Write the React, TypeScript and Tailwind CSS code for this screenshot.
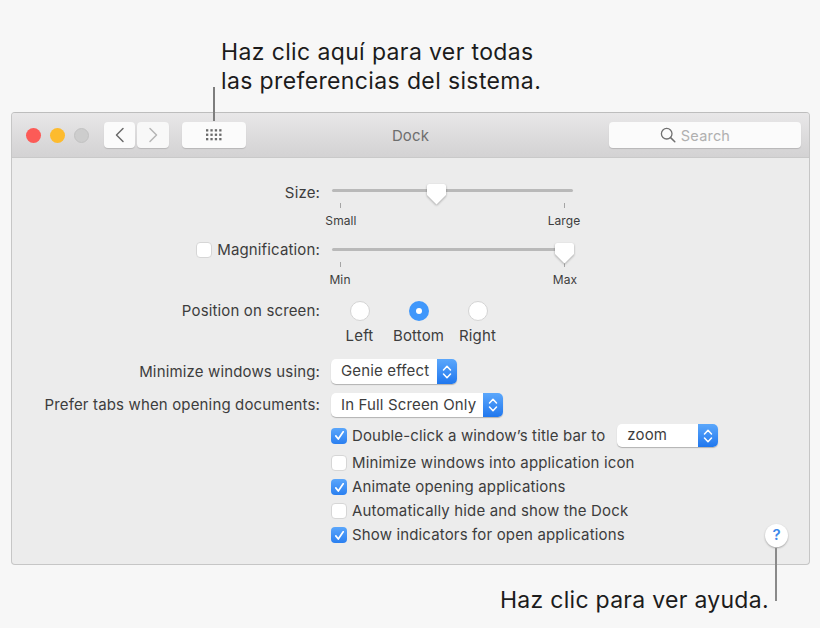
const font = { fontFamily: 'Inter, "Liberation Sans", sans-serif' };

function Check({ on }: { on?: boolean }) {
  return on ? (
    <span className="w-[16px] h-[16px] shrink-0 rounded-[4px] bg-gradient-to-b from-[#5aa6fb] to-[#2a7ff0] flex items-center justify-center">
      <svg width="13" height="13" viewBox="0 0 13 13" fill="none">
        <path d="M2.8 6.9 5.3 10 10.2 2.8" stroke="#fff" strokeWidth="1.7" strokeLinecap="round" strokeLinejoin="round" />
      </svg>
    </span>
  ) : (
    <span className="w-[16px] h-[16px] shrink-0 rounded-[4px] bg-white border border-[#d6d6d6]" />
  );
}

function Chevrons() {
  return (
    <svg width="12" height="18" viewBox="0 0 12 18" fill="none">
      <path d="M2.5 7 6 3.2 9.5 7M2.5 11 6 14.8 9.5 11" stroke="#fff" strokeWidth="1.5" strokeLinecap="round" strokeLinejoin="round" />
    </svg>
  );
}

function Select({ label, width, height }: { label: string; width: string; height: string }) {
  return (
    <div className={`${width} ${height} flex rounded-[5px] bg-white shadow-[0_1px_1px_rgba(0,0,0,0.25)] overflow-hidden`}>
      <span className="flex-1 pl-[10px] flex items-center text-[15px] tracking-[0.15px] text-[#3d3d3d]">{label}</span>
      <span className="w-[20px] flex items-center justify-center bg-gradient-to-b from-[#5ba7fb] to-[#1f77ee]">
        <Chevrons />
      </span>
    </div>
  );
}

function Slider({ thumb, left, right, leftX, rightX }: { thumb: number; left: string; right: string; leftX: number; rightX: number }) {
  return (
    <div className="relative w-[250px] h-[56px]">
      <div className="absolute left-px top-[5px] w-[241px] h-[3px] rounded-full bg-[#b9b9b9]" />
      <div className="absolute left-[9px] top-[19px] w-px h-[5px] bg-[#a5a5a5]" />
      <div className="absolute left-[233px] top-[19px] w-px h-[5px] bg-[#a5a5a5]" />
      <svg className="absolute top-0 drop-shadow-[0_1px_1px_rgba(0,0,0,0.3)]" style={{ left: thumb }} width="19" height="21" viewBox="0 0 19 21">
        <path d="M2.5 0h14A2.5 2.5 0 0 1 19 2.5V11l-9.5 9.5L0 11V2.5A2.5 2.5 0 0 1 2.5 0Z" fill="#fff" />
      </svg>
      <span className="absolute top-[29px] -translate-x-1/2 text-[12px] leading-[16px] tracking-[0.1px] text-[#3d3d3d]" style={{ left: leftX }}>{left}</span>
      <span className="absolute top-[29px] -translate-x-1/2 text-[12px] leading-[16px] tracking-[0.1px] text-[#3d3d3d]" style={{ left: rightX }}>{right}</span>
    </div>
  );
}

function Radio({ label, on }: { label: string; on?: boolean }) {
  return (
    <div className="w-[59px] flex flex-col items-center gap-[5px]">
      {on ? (
        <span className="w-[20px] h-[20px] rounded-full bg-[#3f97fb] flex items-center justify-center">
          <span className="w-[6px] h-[6px] rounded-full bg-white" />
        </span>
      ) : (
        <span className="w-[20px] h-[20px] rounded-full bg-white border border-[#d4d4d4]" />
      )}
      <span className="text-[15px] leading-[20px] tracking-[0.15px] text-[#3d3d3d]">{label}</span>
    </div>
  );
}

function Row({ label, children, className, labelClass = "" }: { label: React.ReactNode; children: React.ReactNode; className: string; labelClass?: string }) {
  return (
    <div className={`flex ${className}`}>
      <div className={`w-[308px] shrink-0 flex justify-end items-center gap-[5px] h-[20px] text-[15px] leading-[20px] tracking-[0.15px] text-[#3d3d3d] whitespace-nowrap ${labelClass}`}>{label}</div>
      <div className="ml-[11px]">{children}</div>
    </div>
  );
}

function CheckRow({ on, label, className }: { on?: boolean; label: string; className: string }) {
  return (
    <div className={`flex items-center gap-[5px] h-[20px] text-[15px] leading-[20px] tracking-[0.15px] text-[#3d3d3d] whitespace-nowrap ${className}`}>
      <Check on={on} />
      <span>{label}</span>
    </div>
  );
}

export default function App() {
  return (
    <div className="relative w-[820px] h-[628px] bg-[#f7f7f7] overflow-hidden" style={font}>
      <div className="pl-[221px] pt-[38px] h-[112px] text-[23px] leading-[29px] tracking-[0.37px] text-[#1c1c1c]">
        <div>Haz clic aquí para ver todas</div>
        <div>las preferencias del sistema.</div>
      </div>

      <div className="ml-[11px] w-[799px] h-[453px] rounded-[4px] border border-[#c6c6c6] border-t-[#bdbdbd] bg-[#ececec] overflow-hidden flex flex-col">
        <div className="h-[45px] shrink-0 flex items-center pl-[14px] pr-[8px] bg-gradient-to-b from-[#e8e7e8] to-[#d3d2d3] border-b border-[#c9c9c9]">
          <span className="w-[15px] h-[15px] rounded-full bg-[#fc5b57]" />
          <span className="ml-[9px] w-[15px] h-[15px] rounded-full bg-[#fdbb2e]" />
          <span className="ml-[9px] w-[15px] h-[15px] rounded-full bg-[#cdcdcd] border border-[#c2c2c2]" />
          <div className="ml-[15px] flex gap-[2px]">
            <span className="w-[31px] h-[26px] rounded-[4px] bg-[#fbfbfb] shadow-[0_1px_1px_rgba(0,0,0,0.15)] flex items-center justify-center">
              <svg width="12" height="16" viewBox="0 0 12 16" fill="none"><path d="M9 1.5 2.5 8 9 14.5" stroke="#6a6a6a" strokeWidth="1.5" strokeLinecap="round" strokeLinejoin="round" /></svg>
            </span>
            <span className="w-[32px] h-[26px] rounded-[4px] bg-[#f8f8f8] shadow-[0_1px_1px_rgba(0,0,0,0.15)] flex items-center justify-center">
              <svg width="12" height="16" viewBox="0 0 12 16" fill="none"><path d="M3 1.5 9.5 8 3 14.5" stroke="#b5b5b5" strokeWidth="1.5" strokeLinecap="round" strokeLinejoin="round" /></svg>
            </span>
          </div>
          <span className="ml-[13px] w-[64px] h-[26px] rounded-[4px] bg-[#fbfbfb] shadow-[0_1px_1px_rgba(0,0,0,0.15)] flex items-center justify-center">
            <svg width="18" height="14" viewBox="0 0 18 14" fill="#6a6a6a">
              {[0, 1, 2].map((r) => [0, 1, 2, 3].map((c) => <rect key={`${r}-${c}`} x={1 + c * 4.4} y={1.2 + r * 4.4} width="2.3" height="2.3" />))}
            </svg>
          </span>
          <span className="flex-1 text-center pr-[34px] pt-[2px] text-[15px] tracking-[0.15px] text-[#6e6e6e]">Dock</span>
          <span className="w-[192px] h-[26px] rounded-[4px] bg-[#fbfbfb] shadow-[0_1px_1px_rgba(0,0,0,0.15)] flex items-center justify-center gap-[5px] pr-[20px]">
            <svg width="16" height="16" viewBox="0 0 16 16" fill="none"><circle cx="6.7" cy="6.7" r="5.3" stroke="#707070" strokeWidth="1.3" /><path d="m10.6 10.6 4.2 4.2" stroke="#707070" strokeWidth="1.5" strokeLinecap="round" /></svg>
            <span className="pt-[1px] text-[14.5px] tracking-[0.2px] text-[#b0b0b0]">Search</span>
          </span>
        </div>

        <div className="relative flex-1 pt-[24px]">
          <Row label="Size:" labelClass="mt-[1px]" className="h-[60px]">
            <div className="mt-[2px]"><Slider thumb={96} left="Small" right="Large" leftX={10} rightX={233} /></div>
          </Row>
          <Row label={<><Check /><span>Magnification:</span></>} labelClass="-mt-[2px]" className="h-[60px]">
            <div className="mt-[1px]"><Slider thumb={224} left="Min" right="Max" leftX={9} rightX={234} /></div>
          </Row>
          <Row label="Position on screen:" className="mt-[-1px] h-[48px]">
            <div className="flex -ml-[1px]">
              <Radio label="Left" />
              <Radio label="Bottom" on />
              <Radio label="Right" />
            </div>
          </Row>
          <Row label="Minimize windows using:" className="mt-[10px] h-[25px] items-center">
            <Select label="Genie effect" width="w-[126px]" height="h-[25px]" />
          </Row>
          <Row label="Prefer tabs when opening documents:" className="mt-[9px] h-[24px] items-center">
            <Select label="In Full Screen Only" width="w-[172px]" height="h-[24px]" />
          </Row>
          <div className="ml-[319px] mt-[7px]">
            <div className="flex items-center h-[23px]">
              <CheckRow on label="Double-click a window’s title bar to" className="" />
              <div className="ml-[12px]"><Select label="zoom" width="w-[101px]" height="h-[23px]" /></div>
            </div>
            <CheckRow label="Minimize windows into application icon" className="mt-[6px]" />
            <CheckRow on label="Animate opening applications" className="mt-[4px]" />
            <CheckRow label="Automatically hide and show the Dock" className="mt-[4px]" />
            <CheckRow on label="Show indicators for open applications" className="mt-[4px]" />
          </div>
          <span className="absolute left-[753px] top-[366px] w-[23px] h-[23px] rounded-full bg-white shadow-[0_1px_2px_rgba(0,0,0,0.3)] flex items-center justify-center text-[15px] font-semibold text-[#3b88ea]">?</span>
        </div>
      </div>

      <div className="absolute left-[213px] top-[87px] w-[2px] h-[34px] bg-[#7d7d7d]" />
      <div className="absolute left-[775px] top-[548px] w-[2px] h-[53px] bg-[#8a8a8a]" />
      <div className="absolute left-[500px] top-[586px] text-[23px] leading-[29px] tracking-[0.28px] text-[#1c1c1c]">Haz clic para ver ayuda.</div>
    </div>
  );
}
